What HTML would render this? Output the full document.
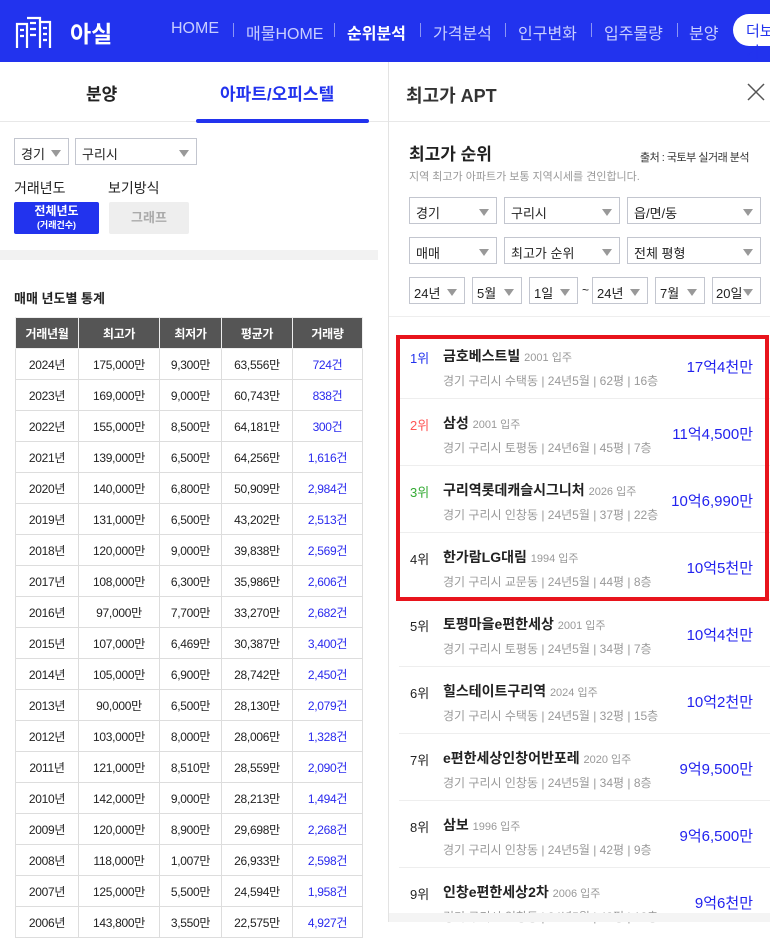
<!DOCTYPE html>
<html><head><meta charset="utf-8"><style>
*{margin:0;padding:0;box-sizing:border-box}
body{width:770px;height:922px;overflow:hidden;background:#fff;font-family:"Liberation Sans","Noto Sans CJK KR",sans-serif;position:relative;color:#222}
.a{position:absolute}
#hd{left:0;top:0;width:770px;height:62px;background:#2233ee}
.nav{top:20px;font-size:16px;color:#c8ceff;white-space:nowrap}
.sep{top:23px;width:1px;height:14px;background:#8b95f5}
.sel{border:1px solid #c3c6cf;height:27px;font-size:13px;padding:5px 6px;color:#222;background:#fff;white-space:nowrap}
.sel:after{content:"";position:absolute;right:7px;top:11px;border-left:5px solid transparent;border-right:5px solid transparent;border-top:7px solid #999}
table{border-collapse:collapse;font-size:12px;text-align:center}
td,th{border:1px solid #ddd;height:31px;letter-spacing:-0.3px}
th{background:#555;color:#fff;font-weight:bold;border-color:#eee}
td.b{color:#2a2aee}
.rk{font-size:13px}
.nm{font-size:14px;font-weight:bold;color:#222;white-space:nowrap}
.nm span{font-size:11px;font-weight:normal;color:#999}
.inf{font-size:12px;color:#999;white-space:nowrap}
.pr{font-size:15px;color:#2222ee;text-align:right;right:17px}
.ln{left:399px;width:371px;height:1px;background:#eee}
</style></head><body>
<div id="hd" class="a"></div>
<svg class="a" style="left:15px;top:10px" width="50" height="40" viewBox="0 0 50 40" fill="none" stroke="#fff" stroke-width="2.2">
<path d="M2 38V14h10v24M12 8h13v30M25 12h10v26"/><path d="M5 20h4M5 26h4M15 13h6M15 19h6M15 25h6M28 18h4M28 24h4M28 30h4"/></svg>
<div class="a" style="left:70px;top:15px;font-size:23px;font-weight:bold;color:#fff">아실</div>
<div class="a nav" style="left:171px">HOME</div><div class="a sep" style="left:233px"></div>
<div class="a nav" style="left:246px">매물HOME</div><div class="a sep" style="left:334px"></div>
<div class="a nav" style="left:347px;color:#fff;font-weight:bold">순위분석</div><div class="a sep" style="left:420px"></div>
<div class="a nav" style="left:433px">가격분석</div><div class="a sep" style="left:505px"></div>
<div class="a nav" style="left:518px">인구변화</div><div class="a sep" style="left:591px"></div>
<div class="a nav" style="left:604px">입주물량</div><div class="a sep" style="left:677px"></div>
<div class="a nav" style="left:689px">분양</div>
<div class="a" style="left:733px;top:14px;width:60px;height:32px;border-radius:16px;background:#fff;color:#2233ee;font-size:15px;padding:6px 13px">더보기</div>

<!-- left -->
<div class="a" style="left:388px;top:62px;width:1px;height:860px;background:#e3e3e3"></div>
<div class="a" style="left:0;top:121px;width:388px;height:1px;background:#e8e8e8"></div>
<div class="a" style="left:86px;top:80px;font-size:17px;font-weight:bold">분양</div>
<div class="a" style="left:220px;top:80px;font-size:17px;color:#2233ee;font-weight:bold">아파트/오피스텔</div>
<div class="a" style="left:196px;top:119px;width:173px;height:4px;border-radius:2px;background:#2233ee"></div>
<div class="a sel" style="left:14px;top:138px;width:55px">경기</div>
<div class="a sel" style="left:75px;top:138px;width:122px">구리시</div>
<div class="a" style="left:14px;top:178px;font-size:14px">거래년도</div>
<div class="a" style="left:108px;top:178px;font-size:14px">보기방식</div>
<div class="a" style="left:14px;top:202px;width:85px;height:32px;background:#2233ee;border-radius:2px;color:#fff;text-align:center;font-weight:bold;font-size:12px;line-height:13px;padding-top:3px">전체년도<br><span style="font-size:9px">(거래건수)</span></div>
<div class="a" style="left:109px;top:202px;width:80px;height:32px;background:#eee;border-radius:2px;color:#aaa;text-align:center;font-weight:bold;font-size:13px;line-height:32px">그래프</div>
<div class="a" style="left:0;top:250px;width:378px;height:10px;background:#f2f2f2"></div>
<div class="a" style="left:14px;top:288px;font-size:13px;font-weight:bold">매매 년도별 통계</div>
<table class="a" style="left:15px;top:317px;width:348px">
<tr><th style="width:63px">거래년월</th><th style="width:81px">최고가</th><th style="width:62px">최저가</th><th style="width:71px">평균가</th><th>거래량</th></tr>
<tr><td>2024년</td><td>175,000만</td><td>9,300만</td><td>63,556만</td><td class="b">724건</td></tr>
<tr><td>2023년</td><td>169,000만</td><td>9,000만</td><td>60,743만</td><td class="b">838건</td></tr>
<tr><td>2022년</td><td>155,000만</td><td>8,500만</td><td>64,181만</td><td class="b">300건</td></tr>
<tr><td>2021년</td><td>139,000만</td><td>6,500만</td><td>64,256만</td><td class="b">1,616건</td></tr>
<tr><td>2020년</td><td>140,000만</td><td>6,800만</td><td>50,909만</td><td class="b">2,984건</td></tr>
<tr><td>2019년</td><td>131,000만</td><td>6,500만</td><td>43,202만</td><td class="b">2,513건</td></tr>
<tr><td>2018년</td><td>120,000만</td><td>9,000만</td><td>39,838만</td><td class="b">2,569건</td></tr>
<tr><td>2017년</td><td>108,000만</td><td>6,300만</td><td>35,986만</td><td class="b">2,606건</td></tr>
<tr><td>2016년</td><td>97,000만</td><td>7,700만</td><td>33,270만</td><td class="b">2,682건</td></tr>
<tr><td>2015년</td><td>107,000만</td><td>6,469만</td><td>30,387만</td><td class="b">3,400건</td></tr>
<tr><td>2014년</td><td>105,000만</td><td>6,900만</td><td>28,742만</td><td class="b">2,450건</td></tr>
<tr><td>2013년</td><td>90,000만</td><td>6,500만</td><td>28,130만</td><td class="b">2,079건</td></tr>
<tr><td>2012년</td><td>103,000만</td><td>8,000만</td><td>28,006만</td><td class="b">1,328건</td></tr>
<tr><td>2011년</td><td>121,000만</td><td>8,510만</td><td>28,559만</td><td class="b">2,090건</td></tr>
<tr><td>2010년</td><td>142,000만</td><td>9,000만</td><td>28,213만</td><td class="b">1,494건</td></tr>
<tr><td>2009년</td><td>120,000만</td><td>8,900만</td><td>29,698만</td><td class="b">2,268건</td></tr>
<tr><td>2008년</td><td>118,000만</td><td>1,007만</td><td>26,933만</td><td class="b">2,598건</td></tr>
<tr><td>2007년</td><td>125,000만</td><td>5,500만</td><td>24,594만</td><td class="b">1,958건</td></tr>
<tr><td>2006년</td><td>143,800만</td><td>3,550만</td><td>22,575만</td><td class="b">4,927건</td></tr>
</table>

<!-- right -->
<div class="a" style="left:406px;top:82px;font-size:18px;font-weight:bold;color:#333">최고가 APT</div>
<svg class="a" style="left:747px;top:83px" width="18" height="18"><path d="M1 1L17 17M17 1L1 17" stroke="#555" stroke-width="1.5"/></svg>
<div class="a" style="left:389px;top:121px;width:381px;height:1px;background:#e8e8e8"></div>
<div class="a" style="left:409px;top:140px;font-size:17px;font-weight:bold">최고가 순위</div>
<div class="a" style="left:640px;top:149px;font-size:11px;color:#333;letter-spacing:-0.5px">출처 : 국토부 실거래 분석</div>
<div class="a" style="left:409px;top:168px;font-size:11px;color:#999">지역 최고가 아파트가 보통 지역시세를 견인합니다.</div>
<div class="a sel" style="left:409px;top:197px;width:88px">경기</div>
<div class="a sel" style="left:504px;top:197px;width:116px">구리시</div>
<div class="a sel" style="left:627px;top:197px;width:134px">읍/면/동</div>
<div class="a sel" style="left:409px;top:237px;width:88px">매매</div>
<div class="a sel" style="left:504px;top:237px;width:116px">최고가 순위</div>
<div class="a sel" style="left:627px;top:237px;width:134px">전체 평형</div>
<div class="a sel" style="left:409px;top:277px;width:56px;padding-left:4px">24년</div>
<div class="a sel" style="left:472px;top:277px;width:50px;padding-left:4px">5월</div>
<div class="a sel" style="left:529px;top:277px;width:49px;padding-left:4px">1일</div>
<div class="a" style="left:582px;top:283px;font-size:12px">~</div>
<div class="a sel" style="left:592px;top:277px;width:56px;padding-left:4px">24년</div>
<div class="a sel" style="left:655px;top:277px;width:50px;padding-left:4px">7월</div>
<div class="a sel" style="left:712px;top:277px;width:49px;padding-left:3px">20일</div>
<div class="a" style="left:389px;top:316px;width:381px;height:1px;background:#eee"></div>

<div class="a ln" style="top:398px"></div><div class="a ln" style="top:465px"></div><div class="a ln" style="top:532px"></div><div class="a ln" style="top:599px"></div><div class="a ln" style="top:666px"></div><div class="a ln" style="top:733px"></div><div class="a ln" style="top:800px"></div><div class="a ln" style="top:867px"></div>

<div class="a rk" style="left:410px;top:348px;color:#2233ee">1위</div><div class="a nm" style="left:443px;top:346px">금호베스트빌 <span>2001 입주</span></div><div class="a inf" style="left:443px;top:372px">경기 구리시 수택동 | 24년5월 | 62평 | 16층</div><div class="a pr" style="top:356px">17억4천만</div>
<div class="a rk" style="left:410px;top:415px;color:#f55">2위</div><div class="a nm" style="left:443px;top:413px">삼성 <span>2001 입주</span></div><div class="a inf" style="left:443px;top:439px">경기 구리시 토평동 | 24년6월 | 45평 | 7층</div><div class="a pr" style="top:423px">11억4,500만</div>
<div class="a rk" style="left:410px;top:482px;color:#3a3">3위</div><div class="a nm" style="left:443px;top:480px">구리역롯데캐슬시그니처 <span>2026 입주</span></div><div class="a inf" style="left:443px;top:506px">경기 구리시 인창동 | 24년5월 | 37평 | 22층</div><div class="a pr" style="top:490px">10억6,990만</div>
<div class="a rk" style="left:410px;top:549px">4위</div><div class="a nm" style="left:443px;top:547px">한가람LG대림 <span>1994 입주</span></div><div class="a inf" style="left:443px;top:573px">경기 구리시 교문동 | 24년5월 | 44평 | 8층</div><div class="a pr" style="top:557px">10억5천만</div>
<div class="a rk" style="left:410px;top:616px">5위</div><div class="a nm" style="left:443px;top:614px">토평마을e편한세상 <span>2001 입주</span></div><div class="a inf" style="left:443px;top:640px">경기 구리시 토평동 | 24년5월 | 34평 | 7층</div><div class="a pr" style="top:624px">10억4천만</div>
<div class="a rk" style="left:410px;top:683px">6위</div><div class="a nm" style="left:443px;top:681px">힐스테이트구리역 <span>2024 입주</span></div><div class="a inf" style="left:443px;top:707px">경기 구리시 수택동 | 24년5월 | 32평 | 15층</div><div class="a pr" style="top:691px">10억2천만</div>
<div class="a rk" style="left:410px;top:750px">7위</div><div class="a nm" style="left:443px;top:748px">e편한세상인창어반포레 <span>2020 입주</span></div><div class="a inf" style="left:443px;top:774px">경기 구리시 인창동 | 24년5월 | 34평 | 8층</div><div class="a pr" style="top:758px">9억9,500만</div>
<div class="a rk" style="left:410px;top:817px">8위</div><div class="a nm" style="left:443px;top:815px">삼보 <span>1996 입주</span></div><div class="a inf" style="left:443px;top:841px">경기 구리시 인창동 | 24년5월 | 42평 | 9층</div><div class="a pr" style="top:825px">9억6,500만</div>
<div class="a rk" style="left:410px;top:884px">9위</div><div class="a nm" style="left:443px;top:882px">인창e편한세상2차 <span>2006 입주</span></div><div class="a inf" style="left:443px;top:908px">경기 구리시 인창동 | 24년5월 | 43평 | 12층</div><div class="a pr" style="top:892px">9억6천만</div>
<div class="a" style="left:389px;top:913px;width:381px;height:9px;background:#f4f4f4"></div>

<div class="a" style="left:396px;top:335px;width:373px;height:266px;border:4px solid #e8141c"></div>
</body></html>
